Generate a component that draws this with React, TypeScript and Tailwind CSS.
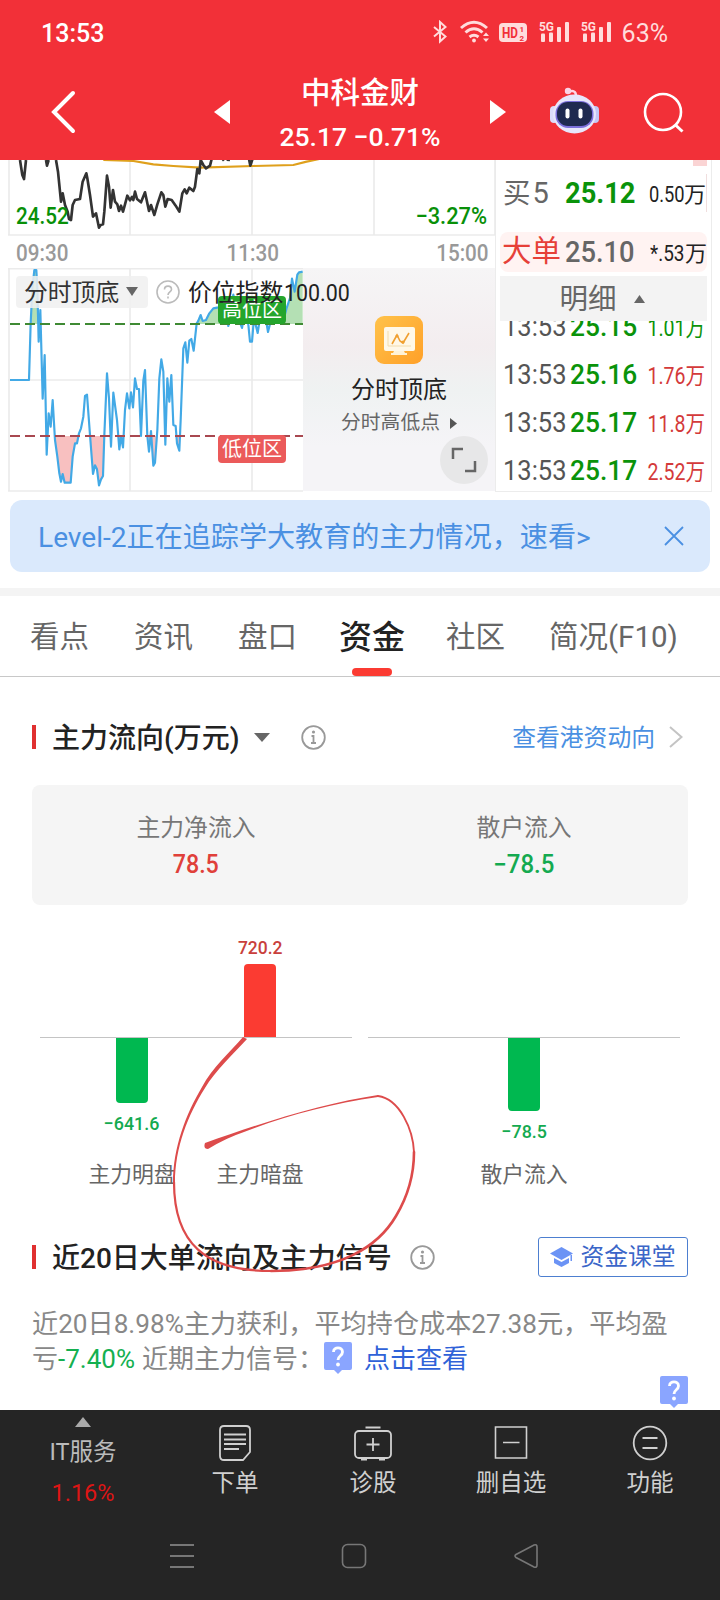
import React from 'react';

const PRICE_LINE =
  'M60 15L67 60L72 72L78 15M138 15L141 32L146 15M168 15L174 50L183 140L188 115L195 150L203 170L207 192L213 195L218 150L225 135L240 132L248 80L259 55L262 70L270 120L279 185L288 175L297 218L302 210L309 208L313 170L321 62L327 95L332 158L339 105L345 140L352 148L357 168L363 152L369 170L375 148L382 122L390 136L396 126L400 135L405 110L411 132L423 142L435 112L447 168L453 150L463 180L472 148L484 112L490 120L496 155L503 132L515 135L527 152L538 170L547 115L554 103L560 115L568 98L580 108L585 95L592 42L598 55L602 15L610 30L618 40L630 32L635 12M668 12L672 17M680 14L690 15M747 12L751 32L757 14';

const INDEX_LINE =
  'L87 336L92 166L97 61L103 6L109 6L112 61L116 221L121 126L128 392L134 261L140 560L146 436L152 476L158 396L165 516L172 566L178 616L183 641L188 618L194 644L212 644L218 566L225 526L231 526L237 496L243 481L250 446L255 384L261 380L270 501L279 618L285 592L291 604L297 652L303 634L309 624L313 501L321 316L327 391L333 536L340 374L351 456L358 544L363 506L369 538L375 426L381 376L388 421L393 373L399 418L405 331L411 363L417 363L423 504L430 338L435 306L442 504L447 551L453 489L460 593L465 584L472 486L478 331L484 274L490 311L496 530L502 331L508 401L514 321L520 471L527 474L531 526L538 548L542 456L550 241L556 223L562 284L568 218L574 213L581 248L590 166L594 160L602 141L608 159L618 156L628 136L640 121L655 118L670 100L685 174L700 80L715 150L726 180L735 130L745 170L750 221L756 221L762 150L773 195L780 150L797 150L804 192L812 160L830 150L845 165L852 150L860 120L870 90L876 32L884 71L892 20L897 13L908 11';

const TICKS = [
  { price: '25.15', volume: '1.01万', up: false },
  { price: '25.16', volume: '1.76万', up: true },
  { price: '25.17', volume: '11.8万', up: true },
  { price: '25.17', volume: '2.52万', up: true },
];

const Signal = () => (
  <svg className="overflow-visible" width="32" height="24" viewBox="0 0 32 24" fill="#ffdcdc">
    <text x="0" y="11" fontSize="13.500" fontWeight="700" textLength="15" lengthAdjust="spacingAndGlyphs">5G</text>
    <rect x="2" y="13.500" width="4" height="8.500" rx="1" />
    <rect x="10" y="12.500" width="4" height="9.500" rx="1" />
    <rect x="18" y="7" width="4" height="15" rx="1" />
    <rect x="26" y="2" width="4" height="20" rx="1" />
  </svg>
);

const StatusBar = () => (
  <div className="flex h-16 items-center pl-[41px] pr-[52px]">
    <span className="mt-[2px] text-[25px] font-medium leading-none">13:53</span>
    <div className="ml-auto flex items-center text-[#ffdcdc]">
      <svg className="mr-[13px]" width="14" height="24" viewBox="0 0 14 24" fill="none" stroke="currentColor" strokeWidth="2">
        <path d="M1 7L12.500 16.500L7 21.500V2L12.500 7L1 16.500" />
      </svg>
      <svg className="mr-[9px]" width="30" height="24" viewBox="0 0 30 24" fill="none" stroke="currentColor" strokeWidth="3">
        <path d="M1 8Q14 -3.500 27 8M5.500 12.500Q14 5 22.500 12.500M9.500 17Q14 13.500 18.500 17" />
        <circle cx="14" cy="20.500" r="1.900" fill="currentColor" stroke="none" />
        <path d="M23 16L26 12.500L29 16ZM23 18.500L26 22L29 18.500Z" fill="currentColor" stroke="none" />
      </svg>
      <svg className="mr-3" width="28" height="24" viewBox="0 0 28 24">
        <rect x="0" y="3" width="28" height="19" rx="4" fill="#ffdcdc" />
        <text x="3" y="18" fontSize="15.500" fontWeight="700" fill="#f23038" textLength="16" lengthAdjust="spacingAndGlyphs">HD</text>
        <text x="20.500" y="11.500" fontSize="8" fontWeight="700" fill="#f23038">1</text>
        <text x="20.500" y="20.500" fontSize="8" fontWeight="700" fill="#f23038">2</text>
      </svg>
      <div className="mr-[10px]"><Signal /></div>
      <div className="mr-[9px]"><Signal /></div>
      <span className="mt-[3px] text-[25px] leading-none">63%</span>
    </div>
  </div>
);

const TitleBar = () => (
  <div className="flex h-24 items-center pl-[51px] pr-9">
    <svg width="25" height="44" viewBox="0 0 25 44" fill="none" stroke="white" strokeWidth="4" strokeLinecap="round">
      <path d="M22 3L3 22L22 41" />
    </svg>
    <svg className="ml-[138px]" width="16" height="24" viewBox="0 0 16 24" fill="white"><path d="M16 0V24L0 12Z" /></svg>
    <div className="flex w-[260px] flex-col items-center pt-[6px]">
      <span className="text-[29.500px] font-medium leading-[44px]">中科金财</span>
      <span className="text-[26.500px] font-medium leading-[44px]">25.17 −0.71%</span>
    </div>
    <svg width="16" height="24" viewBox="0 0 16 24" fill="white"><path d="M0 0V24L16 12Z" /></svg>
    <svg className="ml-11 -mt-1" width="49" height="48" viewBox="0 0 49 48">
      <path d="M18 6Q26 3 26 10" fill="none" stroke="#ffd5e4" strokeWidth="2.500" />
      <circle cx="18" cy="5" r="3.200" fill="#fbd3e6" />
      <rect x="0" y="20" width="8" height="17" rx="4" fill="#dcdcfa" />
      <rect x="41" y="20" width="8" height="17" rx="4" fill="#c3c6f5" />
      <ellipse cx="24.500" cy="28" rx="21.500" ry="19.500" fill="#e7e6fb" />
      <rect x="5.500" y="15" width="38" height="27" rx="12.500" fill="#7c70dc" />
      <rect x="7" y="16" width="35" height="24" rx="11" fill="#1f2a50" />
      <rect x="15.500" y="22.500" width="4" height="10" rx="2" fill="white" />
      <rect x="28.500" y="22.500" width="4" height="10" rx="2" fill="white" />
    </svg>
    <svg className="ml-auto" width="41" height="41" viewBox="0 0 41 41" fill="none" stroke="white" strokeWidth="2.600">
      <circle cx="20" cy="20" r="18" />
      <path d="M32.500 33L39.500 39.500" strokeWidth="3" />
    </svg>
  </div>
);

const PriceChart = () => (
  <div className="relative h-[76px]">
    <svg className="block" width="496" height="76" viewBox="0 15 1488 228" fill="none">
      <path d="M27 0V240M390 0V240M756 0V240M1122 0V240M1485 0V240M24 240H1488" stroke="#ebebeb" strokeWidth="5" />
      <path d="M310 15L400 18L460 28L520 33L600 38L760 33L880 30L920 20L958 12" stroke="#dfa01c" strokeWidth="6.500" />
      <path d={PRICE_LINE} stroke="#333" strokeWidth="8" strokeLinejoin="round" />
    </svg>
    <span className="absolute left-4 top-[44px] origin-left scale-x-[0.88] text-[23.500px] font-medium leading-6 text-[#089008]">24.52</span>
    <span className="absolute right-2 top-[44px] origin-right scale-x-[0.93] text-[23.500px] font-medium leading-6 text-[#089008]">−3.27%</span>
  </div>
);

const IndexChart = () => (
  <div className="relative h-[224px] w-[303px]">
    <svg className="block" width="303" height="224" viewBox="0 0 909 672" fill="none">
      <clipPath id="high"><rect width="909" height="168" /></clipPath>
      <clipPath id="low"><rect y="504" width="909" height="168" /></clipPath>
      <path d="M27 2V669M390 2V669M756 2V669M24 2H909M24 336H909M24 669H909" stroke="#ebebeb" strokeWidth="5" />
      <path d={`M30 168L30 336${INDEX_LINE}V168Z`} fill="#b4e0b4" clipPath="url(#high)" />
      <path d={`M30 504L30 336${INDEX_LINE}V504Z`} fill="#f8c0c0" clipPath="url(#low)" />
      <path d={`M30 336${INDEX_LINE}`} stroke="#42a9e6" strokeWidth="6.500" strokeLinejoin="round" />
      <path d="M30 168H909" stroke="#3f8a34" strokeWidth="6.500" strokeDasharray="30 15" />
      <path d="M30 504H909" stroke="#a84850" strokeWidth="6.500" strokeDasharray="30 15" />
    </svg>
    <div className="absolute left-[218px] top-[28px] flex h-[28px] w-[68px] items-center justify-center rounded-sm bg-[#24a52c] text-[20px] text-white">高位区</div>
    <div className="absolute left-[218px] top-[167px] flex h-[28px] w-[68px] items-center justify-center rounded-sm bg-[#eb5a5a] text-[20px] text-white">低位区</div>
    <div className="absolute left-4 top-2 flex h-8 items-center whitespace-nowrap">
      <div className="flex h-8 w-[132px] items-center rounded bg-[#f0f0f0]/85 pl-2 pt-[3px] text-[23.800px] text-[#333]">
        分时顶底
        <svg className="ml-[7px] -mt-1" width="12" height="9" viewBox="0 0 12 9" fill="#666"><path d="M0 0H12L6 9Z" /></svg>
      </div>
      <svg className="ml-2" width="24" height="24" viewBox="0 0 24 24" fill="none" stroke="#bbb" strokeWidth="1.600">
        <circle cx="12" cy="12" r="11" />
        <path d="M8.500 9.500C8.500 5 15.500 5 15.500 9.500C15.500 12 12 12 12 15M12 16.500V18.500" />
      </svg>
      <span className="ml-2 pt-1 text-[23.800px] text-[#222]">价位指数</span>
      <span className="ml-px origin-left scale-x-[0.9] pt-1 text-[23.800px] text-[#222]">100.00</span>
    </div>
  </div>
);

const PromoPanel = () => (
  <div className="flex h-[223px] w-[193px] flex-col items-center bg-[linear-gradient(to_bottom,#f6f5f6,#f3edef_35%,#eff2f2_55%,#f5f4f7_80%)] pt-[48px]">
    <svg width="48" height="48" viewBox="0 0 48 48">
      <defs>
        <linearGradient id="promo" x1="0" y1="0" x2="1" y2="1">
          <stop offset="0" stopColor="#ffc24a" />
          <stop offset="1" stopColor="#ffa028" />
        </linearGradient>
      </defs>
      <rect width="48" height="48" rx="9" fill="url(#promo)" />
      <rect x="9" y="11" width="31" height="24" rx="2" fill="#fff8e8" />
      <path d="M19 35H29L30 37H32V39H16V37H18Z" fill="#fff3d8" />
      <path d="M13 15V30H36" fill="none" stroke="#f2dcae" />
      <path d="M17 28L22 19L25 25L28 27L34 17" fill="none" stroke="#f0a030" strokeWidth="1.600" />
      <circle cx="22" cy="20" r="1.600" fill="#f0a030" />
      <circle cx="28" cy="26" r="1.600" fill="#f0a030" />
    </svg>
    <span className="mt-[10px] text-[24px] leading-8 text-[#222]">分时顶底</span>
    <div className="mt-[3px] flex items-center gap-[10px] text-[19.800px] leading-7 text-[#666]">
      分时高低点
      <svg width="7" height="11" viewBox="0 0 7 11" fill="#555"><path d="M0 0L7 5.500L0 11Z" /></svg>
    </div>
    <div className="-mt-px mr-[7px] flex size-12 items-center justify-center self-end rounded-full bg-[#e7e7e8]">
      <svg width="26" height="26" viewBox="0 0 26 26" fill="none" stroke="#666" strokeWidth="2.500">
        <path d="M2 12V2H12M24 14V24H14" />
      </svg>
    </div>
  </div>
);

const OrderBook = () => (
  <div className="h-[332px] w-[216px] overflow-hidden border-r border-b border-[#ececec] px-1">
    <div className="ml-auto h-[6px] w-[14px] bg-[#fad4d4]" />
    <div className="mt-2 flex h-[38px] items-center border-r border-[#f0dede] pl-[3px] leading-none">
      <span className="w-[62px] text-[27.500px] text-[#666]">买<span className="ml-[2px] text-[29px]">5</span></span>
      <span className="w-[85px] origin-left scale-x-[0.94] text-[29px] font-bold text-[#0a930a]">25.12</span>
      <span className="flex items-center pt-1 text-[#222]"><span className="mr-[-8px] origin-left scale-x-[0.83] text-[22px]">0.50</span><span className="text-[22px]">万</span></span>
    </div>
    <div className="mt-5 flex h-10 items-center rounded-lg bg-[#fff3f2] pl-[2px] leading-none">
      <span className="w-[63px] text-[29.500px] text-[#e64038]">大单</span>
      <span className="w-[85px] origin-left scale-x-[0.94] text-[29px] font-medium text-[#666]">25.10</span>
      <span className="flex items-center pt-1 text-[#222]"><span className="mr-[-5px] origin-left scale-x-[0.86] text-[22px]">*.53</span><span className="text-[22px]">万</span></span>
    </div>
    <div className="mt-1 flex h-[45px] items-center justify-center gap-[17px] bg-[#f3f3f3] pt-1 pr-[3px] text-[28.500px] leading-none text-[#666]">
      明细
      <svg className="-mt-1" width="11" height="8" viewBox="0 0 11 8" fill="#666"><path d="M0 8H11L5.500 0Z" /></svg>
    </div>
    <div className="overflow-hidden">
      <div className="-mt-[18px]">
        {TICKS.map((tick, i) => (
          <div key={i} className="flex h-12 items-center pl-[3px] leading-none">
            <span className="w-[67px] origin-left scale-x-[0.91] text-[28px] text-[#555]">13:53</span>
            <span className="w-[64px] origin-left scale-x-[0.94] text-[28px] font-medium text-[#0a930a]">{tick.price}</span>
            <span className={`ml-auto origin-right scale-x-[0.85] pt-[3px] pr-[2px] text-[23px] ${tick.up ? 'text-[#d43a3a]' : 'text-[#0a930a]'}`}>{tick.volume}</span>
          </div>
        ))}
      </div>
    </div>
  </div>
);

const Banner = () => (
  <div className="mx-[10px] mt-2 flex h-[72px] items-center rounded-xl bg-[#dae9fc] pl-7 pr-[26px] text-[28.100px] text-[#4a90e2]">
    <span className="pt-[5px]">Level-2正在追踪学大教育的主力情况，速看&gt;</span>
    <svg className="ml-auto" width="20" height="20" viewBox="0 0 20 20" stroke="currentColor" strokeWidth="1.800"><path d="M1 1L19 19M19 1L1 19" /></svg>
  </div>
);

const Tabs = () => (
  <div className="relative flex h-[81px] items-center whitespace-nowrap border-b border-[#c8c8c8] pl-[30px] pt-[3px] text-[29.500px] text-[#666]">
    <span className="w-[104px]">看点</span>
    <span className="w-[104px]">资讯</span>
    <span className="w-[101px]">盘口</span>
    <span className="w-[107px] text-[33px] font-medium text-[#222]">资金</span>
    <span className="w-[103px]">社区</span>
    <span>简况(F10)</span>
    <div className="absolute bottom-0 left-[352px] h-2 w-10 rounded bg-[#fb3b32]" />
  </div>
);

const InfoIcon = () => (
  <svg width="25" height="25" viewBox="0 0 25 25" fill="none" stroke="#999" strokeWidth="1.800">
    <circle cx="12.500" cy="12.500" r="11.300" />
    <path d="M10.500 11H12.500V18M10 18H15" />
    <circle cx="12.500" cy="7" r="1.600" fill="#999" stroke="none" />
  </svg>
);

const QuestionBadge = () => (
  <svg className="inline-block" width="28" height="32" viewBox="0 0 28 32">
    <path d="M2 0H26Q28 0 28 2V26Q28 28 26 28H18L14 32L10 28H2Q0 28 0 26V2Q0 0 2 0Z" fill="#8aa5ff" />
    <path d="M9.500 10C9.500 4.500 18.500 4.500 18.500 10C18.500 14 14 13.500 14 18" fill="none" stroke="white" strokeWidth="2.800" />
    <circle cx="14" cy="22.500" r="1.900" fill="white" />
  </svg>
);

const Summary = () => (
  <div className="mx-8 flex h-[120px] rounded-lg bg-[#f5f5f5] text-center">
    <div className="flex-1 pt-[27px]">
      <div className="text-[23.800px] leading-8 text-[#777]">主力净流入</div>
      <div className="mt-[5px] text-[25px] font-medium leading-8 text-[#e0403a]"><span className="inline-block scale-x-[0.93]">78.5</span></div>
    </div>
    <div className="flex-1 pt-[27px]">
      <div className="text-[23.800px] leading-8 text-[#777]">散户流入</div>
      <div className="mt-[5px] text-[25px] font-medium leading-8 text-[#14aa50]"><span className="inline-block scale-x-[0.96]">−78.5</span></div>
    </div>
  </div>
);

interface BarProps {
  label: string;
  value: number;
  height: number;
}

const Bar: React.FC<BarProps> = ({ label, value, height }) => {
  const up = value > 0;
  return (
    <div className="relative flex h-[264px] w-32 flex-col items-center">
      <div className="flex h-[112px] flex-col items-center justify-end">
        {up && (
          <>
            <span className="mb-1 scale-x-[0.92] text-[19px] font-medium leading-6 text-[#c9403c]">{value}</span>
            <div className="w-8 rounded-t bg-[#fb3b32]" style={{ height }} />
          </>
        )}
      </div>
      <div className="flex h-[124px] flex-col items-center pt-px">
        {!up && (
          <>
            <div className="w-8 rounded-b bg-[#00b850]" style={{ height }} />
            <span className="mt-[9px] scale-x-[0.94] text-[19px] font-medium leading-6 text-[#14aa50]">−{Math.abs(value)}</span>
          </>
        )}
      </div>
      <span className="whitespace-nowrap text-[21.800px] leading-7 text-[#666]">{label}</span>
    </div>
  );
};

const FlowChart = () => (
  <div className="mt-5 flex h-[270px] px-10">
    <div className="relative flex w-[312px] pl-7">
      <div className="absolute inset-x-0 top-[112px] h-px bg-[#c4c4c4]" />
      <Bar label="主力明盘" value={-641.6} height={65} />
      <Bar label="主力暗盘" value={720.2} height={73} />
    </div>
    <div className="relative ml-4 flex w-[312px] justify-center">
      <div className="absolute inset-x-0 top-[112px] h-px bg-[#c4c4c4]" />
      <Bar label="散户流入" value={-78.5} height={73} />
    </div>
  </div>
);

// freehand loop drawn over the dark-pool column
const Scribble = () => (
  <svg className="pointer-events-none absolute left-[160px] top-[1030px]" width="270" height="250" viewBox="160 1030 270 250" fill="none" stroke="#dd4b4b" strokeLinecap="round">
    <path d="M243 1037C230 1052 212 1068 202 1087C186 1114 173 1147 173 1183L175 1183C175 1147 188 1115 205 1088C215 1071 234 1053 247 1039Z" fill="#dd4b4b" stroke="none" />
    <path d="M174 1182C174 1243 205 1271 271 1271" strokeWidth="2.200" />
    <path d="M271 1271C340 1271 378 1247 396 1216C408 1196 414 1176 414 1152" strokeWidth="2.600" />
    <path d="M414 1152C413 1130 400 1099 378 1096" strokeWidth="1.900" />
    <path d="M378 1095C325 1103 260 1123 205 1143Q203 1149 208 1149Q226 1138 244 1132C285 1116 330 1104 378 1097Z" fill="#dd4b4b" stroke="none" />
  </svg>
);

const BottomBar = () => (
  <div className="flex h-[190px] flex-col bg-[#252525] text-[23.500px] text-[#d0d0d0]">
    <div className="flex h-[114px]">
      <div className="flex w-[166px] flex-col items-center pt-[7px] leading-8">
        <svg width="16" height="10" viewBox="0 0 16 10" fill="#aaa"><path d="M0 10H16L8 0Z" /></svg>
        <span className="mt-[9px] text-[#bbb]">IT服务</span>
        <span className="mt-[9px] text-[23.500px] text-[#dd1515]">1.16%</span>
      </div>
      <div className="flex w-[138px] flex-col items-center pt-[15px]">
        <svg width="32" height="36" viewBox="0 0 32 36" fill="none" stroke="currentColor" strokeWidth="1.800">
          <path d="M5 1H27Q31 1 31 5V27L24 35H5Q1 35 1 31V5Q1 1 5 1ZM5 9.500H27M5 14.500H27M5 19H27M5 24H20" />
        </svg>
        <span className="mt-[6px] leading-8">下单</span>
      </div>
      <div className="flex w-[138px] flex-col items-center pt-[15px]">
        <svg width="38" height="36" viewBox="0 0 38 36" fill="none" stroke="currentColor" strokeWidth="1.800">
          <rect x="1" y="6" width="36" height="27" rx="4" />
          <path d="M11.500 2.500H26.500M12.500 19.500H25.500M19 13V26M7 34.500H13M25 34.500H31" />
        </svg>
        <span className="mt-[6px] leading-8">诊股</span>
      </div>
      <div className="flex w-[138px] flex-col items-center pt-[15px]">
        <svg width="34" height="36" viewBox="0 0 34 36" fill="none" stroke="currentColor" strokeWidth="1.600">
          <path d="M1.500 2H32.500V33H1.500ZM9 17.500H25.500" />
        </svg>
        <span className="mt-[6px] leading-8">删自选</span>
      </div>
      <div className="flex w-[140px] flex-col items-center pt-[15px]">
        <svg width="36" height="36" viewBox="0 0 36 36" fill="none" stroke="currentColor" strokeWidth="1.800">
          <circle cx="18" cy="18" r="16.300" />
          <path d="M10.500 13H25.500M10.500 23H25.500" />
        </svg>
        <span className="mt-[6px] leading-8">功能</span>
      </div>
    </div>
    <div className="flex pl-[169px] pt-[19px] text-[#777]">
      <svg width="26" height="26" viewBox="0 0 26 26" stroke="currentColor" strokeWidth="2"><path d="M1 2H25M1 13H25M1 24H25" /></svg>
      <svg className="ml-[146px]" width="26" height="26" viewBox="0 0 26 26" fill="none" stroke="currentColor" strokeWidth="1.600"><rect x="1.500" y="1.500" width="23" height="23" rx="5" /></svg>
      <svg className="ml-[146px]" width="26" height="26" viewBox="0 0 26 26" fill="none" stroke="currentColor" strokeWidth="1.600">
        <path d="M3 11.500L21 2Q24 1 24 4V22Q24 25 21 24L3 14.500Q1 13 3 11.500Z" />
      </svg>
    </div>
  </div>
);

export default function App() {
  return (
    <div className="relative h-[1600px] w-[720px] overflow-hidden bg-white [font-family:Roboto,'Noto_Sans_CJK_SC',sans-serif]">
      <header className="h-40 bg-[#f23038] text-white">
        <StatusBar />
        <TitleBar />
      </header>
      <main className="h-[1250px]">
        <div className="flex h-[332px]">
          <div className="w-[496px] border-r border-[#ececec]">
            <PriceChart />
            <div className="flex h-8 items-center justify-between pl-4 pr-[6px] pt-[3px] text-[23.500px] font-medium text-[#999]">
              <span className="origin-left scale-x-[0.88]">09:30</span>
              <span className="origin-center scale-x-[0.88]">11:30</span>
              <span className="origin-right scale-x-[0.88]">15:00</span>
            </div>
            <div className="flex">
              <IndexChart />
              <PromoPanel />
            </div>
          </div>
          <OrderBook />
        </div>
        <Banner />
        <div className="mt-4 h-2 bg-[#f4f4f4]" />
        <Tabs />
        <div className="flex h-[108px] items-center pl-8 pr-[37px] pt-3">
          <div className="h-6 w-1 bg-[#e03030]" />
          <span className="ml-4 pt-1 text-[28px] font-medium leading-none text-[#222]">主力流向(万元)</span>
          <svg className="ml-[15px] mr-[31px]" width="16" height="9" viewBox="0 0 16 9" fill="#666"><path d="M0 0H16L8 9Z" /></svg>
          <InfoIcon />
          <span className="ml-auto pt-1 text-[23.800px] leading-none text-[#4a90e2]">查看港资动向</span>
          <svg className="ml-[14px]" width="14" height="22" viewBox="0 0 14 22" fill="none" stroke="#c4c4c4" strokeWidth="2"><path d="M1 1L12.500 11L1 21" /></svg>
        </div>
        <Summary />
        <FlowChart />
        <div className="mt-10 flex h-11 items-center px-8">
          <div className="h-6 w-1 bg-[#e03030]" />
          <span className="ml-4 mr-[18px] pt-1 text-[28px] font-medium leading-none text-[#222]">近20日大单流向及主力信号</span>
          <InfoIcon />
          <div className="ml-auto flex h-10 w-[150px] items-center justify-center gap-[7px] rounded-[3px] border border-[#4d7fd0] text-[23.800px] text-[#3b66c8]">
            <svg width="23" height="22" viewBox="0 0 23 22" fill="#6b93f5">
              <path d="M11.500 1L23 7.500L11.500 14L0 7.500Z" />
              <path d="M4 12L11.500 16L19 12V17L11.500 21L4 17ZM20.500 9H22V15H20.500Z" />
            </svg>
            <span className="pt-[2px]">资金课堂</span>
          </div>
        </div>
        <p className="mt-7 whitespace-nowrap pl-8 text-[26.150px] leading-[35px] text-[#888]">
          近20日8.98%主力获利，平均持仓成本27.38元，平均盈
        </p>
        <div className="flex h-[35px] items-center whitespace-nowrap pl-8 text-[26px] text-[#888]">
          亏<span className="mr-[7px] text-[#14b050]">-7.40%</span>近期主力信号：
          <span className="-mt-[3px] leading-none"><QuestionBadge /></span>
          <span className="ml-3 text-[#2f62d8]">点击查看</span>
        </div>
        <div className="flex justify-end pr-8 -mt-px"><QuestionBadge /></div>
      </main>
      <BottomBar />
      <Scribble />
    </div>
  );
}
